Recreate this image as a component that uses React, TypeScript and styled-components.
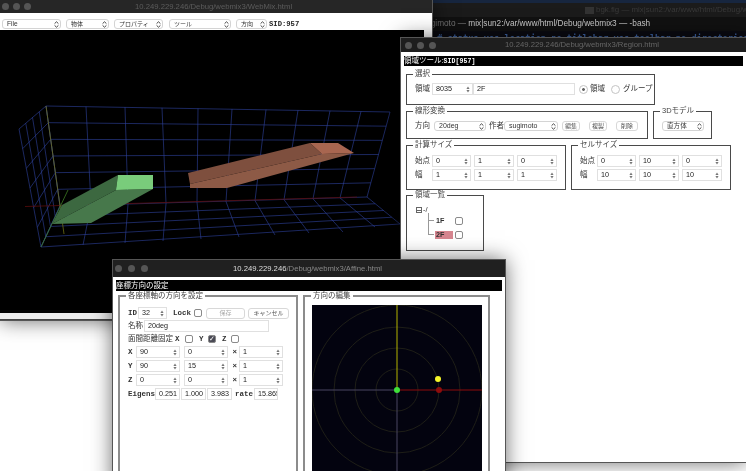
import React from 'react'
import styled, { createGlobalStyle } from 'styled-components'

const GlobalStyle = createGlobalStyle`
  html, body {
    margin: 0;
    padding: 0;
    background: #fff;
  }
`

const UI_FONT = `"Liberation Sans", "Noto Sans CJK JP", sans-serif`
const MONO_FONT = `"Liberation Mono", "Noto Sans CJK JP", monospace`

const Desktop = styled.div`
  position: relative;
  width: 746px;
  height: 471px;
  overflow: hidden;
  background: #fff;
  font: 7.5px/10px ${UI_FONT};
  color: #333;
  filter: blur(0.35px);
`

const Win = styled.section<{ $x: number; $y: number; $w: number; $h: number; $z: number }>`
  position: absolute;
  left: ${(p) => p.$x}px;
  top: ${(p) => p.$y}px;
  width: ${(p) => p.$w}px;
  height: ${(p) => p.$h}px;
  z-index: ${(p) => p.$z};
  background: #fff;
  box-sizing: border-box;
  overflow: hidden;
`

const Shadowed = styled(Win)`
  overflow: visible;
  box-shadow: 0 0 0 1px #555, 0 0 20px rgba(0, 0, 0, 0.62);
`

const TitleBar = styled.header<{ $h: number; $pad: number; $bg: string }>`
  height: ${(p) => p.$h}px;
  background: ${(p) => p.$bg};
  display: flex;
  align-items: center;
  padding-left: ${(p) => p.$pad}px;
  position: relative;
`

const Dots = styled.div<{ $size: number; $gap: number }>`
  display: flex;
  gap: ${(p) => p.$gap}px;
  i {
    display: block;
    width: ${(p) => p.$size}px;
    height: ${(p) => p.$size}px;
    border-radius: 50%;
    background: #555;
  }
`

const TitleText = styled.div<{ $left: number; $color: string }>`
  position: absolute;
  left: ${(p) => p.$left}px;
  font: 7.7px/12px "Liberation Sans", sans-serif;
  color: ${(p) => p.$color};
  white-space: nowrap;
  b {
    font-weight: 400;
    color: #ddd;
  }
`

/* terminal behind everything */
const TermStripe = styled.div`
  height: 3px;
  background: #17263f;
`

const TermTabBack = styled.div`
  height: 14px;
  background: #1b1b1b;
  display: flex;
  align-items: center;
  gap: 2px;
  padding-left: 185px;
  color: #3a3a3a;
  font: 7.9px/12px "Liberation Sans", sans-serif;
  white-space: nowrap;
  i {
    flex: none;
    width: 9px;
    height: 7px;
    background: #333;
  }
`

const TermTabFront = styled.div`
  height: 14px;
  background: #111;
  padding-left: 22px;
  color: #c8c8c8;
  font: 8.25px/14px "Liberation Sans", sans-serif;
  white-space: nowrap;
  span {
    color: #777;
  }
`

const TermBody = styled.div`
  height: 29px;
  background: #0b0b12;
  padding: 2px 0 0 37px;
  color: #3f66a8;
  font: bold 8.65px/10px "DejaVu Sans Mono", monospace;
  white-space: nowrap;
`

/* WebMix */
const Toolbar = styled.div`
  height: 17px;
  box-sizing: border-box;
  display: flex;
  align-items: flex-end;
  padding: 0 0 1px 2px;
  background: #fff;
`

const Chevrons = styled.svg`
  flex: none;
  width: 5px;
  height: 7px;
  margin-left: auto;
`

const Updown = () => (
  <Chevrons viewBox="0 0 5 7">
    <path d="M.6 2.6 2.5.8l1.9 1.8M.6 4.4l1.9 1.8 1.9-1.8" fill="none" stroke="#444" strokeWidth="1" />
  </Chevrons>
)

const SelectBox = styled.div<{ $w: number; $gap?: number; $size?: number }>`
  flex: none;
  width: ${(p) => p.$w}px;
  height: 10px;
  margin-right: ${(p) => p.$gap ?? 0}px;
  box-sizing: border-box;
  border: 1px solid #d4d4d4;
  border-radius: 3px;
  display: flex;
  align-items: center;
  padding: 0 1px 0 4px;
  font-size: ${(p) => p.$size ?? 6}px;
  white-space: nowrap;
  background: #fff;
`

const SidText = styled.span`
  font: bold 7.2px/10px ${MONO_FONT};
  color: #222;
`

const SceneArea = styled.div`
  width: 424px;
  height: 283px;
  background: #000;
`

const SceneSvg = styled.svg`
  display: block;
`

const Strip = styled.div`
  height: 6px;
  background: #ececec;
  border-bottom: 1px solid #444;
`

const topX = [46, 86, 125, 162, 198, 232, 266, 298, 330, 361, 390]
const wallX = [60, 91, 128, 166, 197, 226, 255, 284, 313, 340, 367]
const frontX = [41, 83, 125, 163, 201, 239, 275, 309, 343, 375, 400]
const frontY = [247, 245, 243, 241, 239, 237, 235, 233, 232, 227, 224]
const lerp = (a: number, b: number, t: number) => a + (b - a) * t

const Scene = () => {
  const grid = '#2f43a0'
  const segs: number[][] = []
  topX.forEach((x, i) => {
    const t = i / 10
    segs.push([x, lerp(106, 112, t), wallX[i], lerp(206, 197, t)])
    segs.push([wallX[i], lerp(206, 197, t), frontX[i], frontY[i]])
  })
  for (let r = 1; r < 6; r++) {
    const t = r / 6
    segs.push([lerp(46, 60, t), lerp(106, 206, t), lerp(390, 367, t), lerp(112, 197, t)])
  }
  segs.push([46, 106, 390, 112], [60, 206, 367, 197], [41, 247, 400, 224])
  for (let r = 1; r < 4; r++) {
    const t = r / 4
    segs.push([lerp(60, 41, t), lerp(206, 247, t), lerp(367, 400, t), lerp(197, 224, t)])
  }
  // left wall
  for (let c = 0; c <= 4; c++) {
    const t = c / 4
    segs.push([lerp(19, 46, t), lerp(129, 106, t), lerp(41, 60, t), lerp(247, 206, t)])
  }
  for (let r = 0; r <= 6; r++) {
    const t = r / 6
    segs.push([lerp(19, 41, t), lerp(129, 247, t), lerp(46, 60, t), lerp(106, 206, t)])
  }
  return (
    <SceneSvg width="424" height="283" viewBox="0 30 424 283">
      {segs.map((s, i) => (
        <line key={i} x1={s[0]} y1={s[1]} x2={s[2]} y2={s[3]} stroke={grid} strokeWidth="0.6" />
      ))}
      <line x1="25" y1="206.5" x2="357" y2="197" stroke="#5c0c0c" strokeWidth="0.8" />
      <line x1="46" y1="106" x2="64" y2="234" stroke="#6c6c14" strokeWidth="0.8" />
      <line x1="41" y1="247" x2="68" y2="190" stroke="#3c7a22" strokeWidth="0.8" />
      <polygon points="118,175 62,205 52,224 116,190" fill="#3c6840" />
      <polygon points="116,190 153,189 91,223 52,224" fill="#47784b" />
      <polygon points="118,175 153,175 153,189 116,190" fill="#79cc7b" />
      <polygon points="188,173 310,143 322,154 190,184" fill="#7e4f3e" />
      <polygon points="190,184 322,154 354,153 227,188 190,188" fill="#8d5a46" />
      <polygon points="310,143 338,143 354,153 322,154" fill="#a86650" />
    </SceneSvg>
  )
}

/* shared form bits */
const Band = styled.div<{ $mt: number; $mx: number; $h: number }>`
  height: ${(p) => p.$h}px;
  margin: ${(p) => p.$mt}px ${(p) => p.$mx}px 0;
  background: #000;
  color: #fff;
  font-size: 7.5px;
  line-height: ${(p) => p.$h}px;
  white-space: nowrap;
  code {
    font: bold 6.5px ${MONO_FONT};
    letter-spacing: 0.1px;
  }
`

const Group = styled.fieldset<{ $w: number; $pt: number; $pb: number; $heavy?: boolean; $mt?: number }>`
  flex: none;
  margin: ${(p) => p.$mt ?? 0}px 0 0;
  box-sizing: border-box;
  width: ${(p) => p.$w}px;
  min-width: 0;
  padding: ${(p) => p.$pt}px 0 ${(p) => p.$pb}px 8px;
  border: ${(p) => (p.$heavy ? '2px solid #8c8c8c' : '1px solid #4a4a4a')};
  legend {
    margin-left: -2px;
    padding: 0 2px;
    font-size: 7.5px;
    line-height: 10px;
    color: #444;
    white-space: nowrap;
  }
`

const Row = styled.div<{ $gap?: number; $mt?: number }>`
  display: flex;
  align-items: center;
  gap: ${(p) => p.$gap ?? 0}px;
  margin-top: ${(p) => p.$mt ?? 0}px;
  height: 12px;
  white-space: nowrap;
`

const Label = styled.span<{ $w?: number; $gap?: number }>`
  flex: none;
  width: ${(p) => (p.$w ? `${p.$w}px` : 'auto')};
  margin-right: ${(p) => p.$gap ?? 0}px;
  font-size: 7.5px;
  color: #333;
`

const MonoLabel = styled(Label)`
  font: bold 7.5px/10px ${MONO_FONT};
  color: #333;
`

const Field = styled.div<{ $w: number; $gap?: number }>`
  flex: none;
  width: ${(p) => p.$w}px;
  height: 12px;
  margin-right: ${(p) => p.$gap ?? 0}px;
  box-sizing: border-box;
  border: 1px solid #e0e0e0;
  display: flex;
  align-items: center;
  padding: 0 2px 0 3px;
  font-size: 7.2px;
  color: #222;
  overflow: hidden;
`

const Spin = styled.svg`
  flex: none;
  width: 4px;
  height: 7px;
  margin-left: auto;
`

const SpinIcon = () => (
  <Spin viewBox="0 0 4 7">
    <path d="M2 .5 3.6 3H.4zM2 6.5 3.6 4H.4z" fill="#777" />
  </Spin>
)

const NumField = ({ w, gap, value }: { w: number; gap?: number; value: string }) => (
  <Field $w={w} $gap={gap}>
    {value}
    <SpinIcon />
  </Field>
)

const Check = styled.span<{ $on?: boolean; $gap?: number }>`
  flex: none;
  width: 8px;
  height: 8px;
  margin-right: ${(p) => p.$gap ?? 0}px;
  box-sizing: border-box;
  border: 1px solid #8a8a8a;
  border-radius: 2px;
  background: ${(p) => (p.$on ? '#4a4a55' : '#fff')};
  color: #fff;
  font: 7px/6px "DejaVu Sans", sans-serif;
  text-align: center;
`

const Radio = styled.span<{ $on?: boolean; $ml: number; $mr: number }>`
  flex: none;
  width: 9px;
  height: 9px;
  margin: 0 ${(p) => p.$mr}px 0 ${(p) => p.$ml}px;
  box-sizing: border-box;
  border-radius: 50%;
  border: 1px solid #c4c4c4;
  background: ${(p) => (p.$on ? 'radial-gradient(circle, #666 0 1.2px, #fff 1.6px)' : '#fff')};
`

const Btn = styled.div<{ $w: number; $gap?: number; $muted?: boolean; $h?: number }>`
  flex: none;
  width: ${(p) => p.$w}px;
  height: ${(p) => p.$h ?? 10}px;
  margin-right: ${(p) => p.$gap ?? 0}px;
  box-sizing: border-box;
  border: 1px solid #d8d8d8;
  border-radius: 3px;
  font-size: 6px;
  line-height: ${(p) => (p.$h ?? 10) - 2}px;
  text-align: center;
  color: ${(p) => (p.$muted ? '#aaa' : '#555')};
  background: #fff;
`

/* Region */
const RegionBody = styled.div`
  display: flex;
  flex-wrap: wrap;
  gap: 1px 5px;
  padding: 3px 0 0 5px;
  width: 340px;
`

const TreeRoot = styled.div`
  display: flex;
  align-items: center;
  gap: 1px;
  height: 10px;
  margin-left: 1px;
  font-size: 7.5px;
`

const Minus = styled.span`
  width: 6px;
  height: 6px;
  box-sizing: border-box;
  border: 1px solid #666;
  background: linear-gradient(#666, #666) center / 4px 1px no-repeat;
`

const TreeRow = styled.div<{ $h: number }>`
  display: flex;
  align-items: flex-end;
  height: ${(p) => p.$h}px;
  margin-left: 13px;
`

const Connector = styled.span<{ $h: number }>`
  flex: none;
  width: 6px;
  height: ${(p) => p.$h}px;
  margin-bottom: 4px;
  border-left: 1px solid #999;
  border-bottom: 1px solid #999;
  box-sizing: border-box;
`

const NodeName = styled.span<{ $on?: boolean }>`
  flex: none;
  width: 18px;
  height: 8px;
  margin: 0 2px 0 1px;
  padding-left: 1px;
  box-sizing: border-box;
  font: bold 7.2px/8px ${UI_FONT};
  color: #333;
  background: ${(p) => (p.$on ? '#d6858f' : 'transparent')};
`

/* Affine */
const AffineBody = styled.div`
  display: flex;
  gap: 5px;
  padding: 0 0 0 5px;
`

const Dial = styled.svg`
  display: block;
  margin: 4px 0 0 -1px;
`

const Filler = styled.div`
  height: 120px;
`

const ROWS = [
  { axis: 'X', a: '90', b: '0' },
  { axis: 'Y', a: '90', b: '15' },
  { axis: 'Z', a: '0', b: '0' },
]

const SIZE_ROWS = [
  { name: '計算サイズ', rows: [['0', '1', '0'], ['1', '1', '1']] },
  { name: 'セルサイズ', rows: [['0', '10', '0'], ['10', '10', '10']] },
]

const DialDrawing = () => (
  <Dial width="170" height="170" viewBox="312 305 170 170">
    <rect x="312" y="305" width="170" height="170" fill="#03030f" />
    {[21, 42, 63, 85].map((r) => (
      <circle key={r} cx="397" cy="390" r={r} fill="none" stroke="#1e1e17" strokeWidth="1" />
    ))}
    <line x1="312" y1="390" x2="397" y2="390" stroke="#4a4662" />
    <line x1="397" y1="390" x2="397" y2="475" stroke="#4a4662" />
    <line x1="397" y1="305" x2="397" y2="390" stroke="#b4b400" />
    <line x1="397" y1="390" x2="482" y2="390" stroke="#8e0c0c" />
    <circle cx="439" cy="390" r="3" fill="#8e0c0c" />
    <circle cx="438" cy="379" r="3" fill="#f6f62a" />
    <circle cx="397" cy="390" r="3" fill="#3fe03a" />
  </Dial>
)

export default function App() {
  return (
    <Desktop>
      <GlobalStyle />

      <Win $x={400} $y={0} $w={346} $h={60} $z={1}>
        <TermStripe />
        <TermTabBack>
          <i />
          bgk.fig — mix|sun2:/var/www/html/Debug/webmix3
        </TermTabBack>
        <TermTabFront>
          <span>sugimoto — </span>mix|sun2:/var/www/html/Debug/webmix3 — -bash
        </TermTabFront>
        <TermBody># status=yes location=no titlebar=yes toolbar=no directories=no</TermBody>
      </Win>

      <Shadowed $x={0} $y={0} $w={432} $h={320} $z={2}>
        <TitleBar $h={13} $pad={2} $bg="#262626">
          <Dots $size={7} $gap={4}>
            <i />
            <i />
            <i />
          </Dots>
          <TitleText $left={135} $color="#5c5c5c">
            10.249.229.246/Debug/webmix3/WebMix.html
          </TitleText>
        </TitleBar>
        <Toolbar>
          <SelectBox $w={59} $gap={5} $size={6.6}>File<Updown /></SelectBox>
          <SelectBox $w={43} $gap={5}>物体<Updown /></SelectBox>
          <SelectBox $w={49} $gap={6}>プロパティ<Updown /></SelectBox>
          <SelectBox $w={62} $gap={5}>ツール<Updown /></SelectBox>
          <SelectBox $w={31} $gap={2}>方向<Updown /></SelectBox>
          <SidText>SID:957</SidText>
        </Toolbar>
        <SceneArea>
          <Scene />
        </SceneArea>
        <Strip />
      </Shadowed>

      <Shadowed $x={401} $y={38} $w={345} $h={424} $z={3}>
        <TitleBar $h={14} $pad={4} $bg="#1e1e1e">
          <Dots $size={7} $gap={5}>
            <i />
            <i />
            <i />
          </Dots>
          <TitleText $left={104} $color="#666">
            10.249.229.246/Debug/webmix3/Region.html
          </TitleText>
        </TitleBar>
        <Band $mt={4} $mx={3} $h={10}>
          領域ツール:<code>SID[957]</code>
        </Band>
        <RegionBody>
          <Group $w={249} $pt={4} $pb={9}>
            <legend>選択</legend>
            <Row>
              <Label $w={17}>領域</Label>
              <NumField w={41} value="8035" />
              <Field $w={102}>2F</Field>
              <Radio $on $ml={4} $mr={2} />
              <Label $w={19}>領域</Label>
              <Radio $ml={2} $mr={3} />
              <Label>グループ</Label>
            </Row>
          </Group>
          <Group $w={242} $pt={4} $pb={6}>
            <legend>線形変換</legend>
            <Row>
              <Label $w={19}>方向</Label>
              <SelectBox $w={52} $gap={3} $size={7}>20deg<Updown /></SelectBox>
              <Label $w={15}>作者</Label>
              <SelectBox $w={54} $gap={4} $size={7}>sugimoto<Updown /></SelectBox>
              <Btn $w={18} $gap={9}>編集</Btn>
              <Btn $w={18} $gap={9}>複製</Btn>
              <Btn $w={22}>削除</Btn>
            </Row>
          </Group>
          <Group $w={59} $pt={4} $pb={6}>
            <legend>3Dモデル</legend>
            <Row>
              <SelectBox $w={42} $size={6.6}>直方体<Updown /></SelectBox>
            </Row>
          </Group>
          {SIZE_ROWS.map((g) => (
            <Group key={g.name} $w={160} $pt={5} $pb={8}>
              <legend>{g.name}</legend>
              {g.rows.map((vals, r) => (
                <Row key={r} $mt={r ? 2 : 0}>
                  <Label $w={17}>{r ? '幅' : '始点'}</Label>
                  <NumField w={39} gap={3} value={vals[0]} />
                  <NumField w={40} gap={3} value={vals[1]} />
                  <NumField w={40} value={vals[2]} />
                </Row>
              ))}
            </Group>
          ))}
          <Group $w={78} $pt={5} $pb={11} $mt={-1}>
            <legend>領域一覧</legend>
            <TreeRoot>
              <Minus />-/
            </TreeRoot>
            <TreeRow $h={10}>
              <Connector $h={8} />
              <NodeName>1F</NodeName>
              <Check />
            </TreeRow>
            <TreeRow $h={14}>
              <Connector $h={14} />
              <NodeName $on>2F</NodeName>
              <Check />
            </TreeRow>
          </Group>
        </RegionBody>
      </Shadowed>

      <Shadowed $x={113} $y={260} $w={392} $h={230} $z={4}>
        <TitleBar $h={17} $pad={2} $bg="#202020">
          <Dots $size={7} $gap={6}>
            <i />
            <i />
            <i />
          </Dots>
          <TitleText $left={120} $color="#888">
            <b>10.249.229.246</b>/Debug/webmix3/Affine.html
          </TitleText>
        </TitleBar>
        <Band $mt={3} $mx={3} $h={11}>
          座標方向の設定
        </Band>
        <AffineBody>
          <Group $w={180} $pt={6} $pb={0} $heavy>
            <legend>各座標軸の方向を設定</legend>
            <Row>
              <MonoLabel $w={10}>ID</MonoLabel>
              <NumField w={29} gap={6} value="32" />
              <MonoLabel $w={21}>Lock</MonoLabel>
              <Check $gap={4} />
              <Btn $w={39} $gap={3} $h={11} $muted>保存</Btn>
              <Btn $w={41} $h={11}>キャンセル</Btn>
            </Row>
            <Row $mt={1}>
              <Label $w={16}>名称</Label>
              <Field $w={125}>20deg</Field>
            </Row>
            <Row $mt={1}>
              <Label $w={47}>面間距離固定</Label>
              <MonoLabel $w={10}>X</MonoLabel>
              <Check $gap={6} />
              <MonoLabel $w={9}>Y</MonoLabel>
              <Check $on $gap={6}>✓</Check>
              <MonoLabel $w={9}>Z</MonoLabel>
              <Check />
            </Row>
            {ROWS.map((row, i) => (
              <Row key={row.axis} $mt={i ? 2 : 1}>
                <MonoLabel $w={8}>{row.axis}</MonoLabel>
                <NumField w={44} gap={4} value={row.a} />
                <NumField w={44} value={row.b} />
                <MonoLabel $w={11}>&nbsp;×</MonoLabel>
                <NumField w={44} value="1" />
              </Row>
            ))}
            <Row $mt={2}>
              <MonoLabel $w={27}>Eigens</MonoLabel>
              <Field $w={25} $gap={1}>0.251</Field>
              <Field $w={25} $gap={1}>1.000</Field>
              <Field $w={25} $gap={3}>3.983</Field>
              <MonoLabel $w={19}>rate</MonoLabel>
              <Field $w={24}>15.865</Field>
            </Row>
            <Filler />
          </Group>
          <Group $w={187} $pt={0} $pb={0} $heavy>
            <legend>方向の編集</legend>
            <DialDrawing />
          </Group>
        </AffineBody>
      </Shadowed>
    </Desktop>
  )
}
